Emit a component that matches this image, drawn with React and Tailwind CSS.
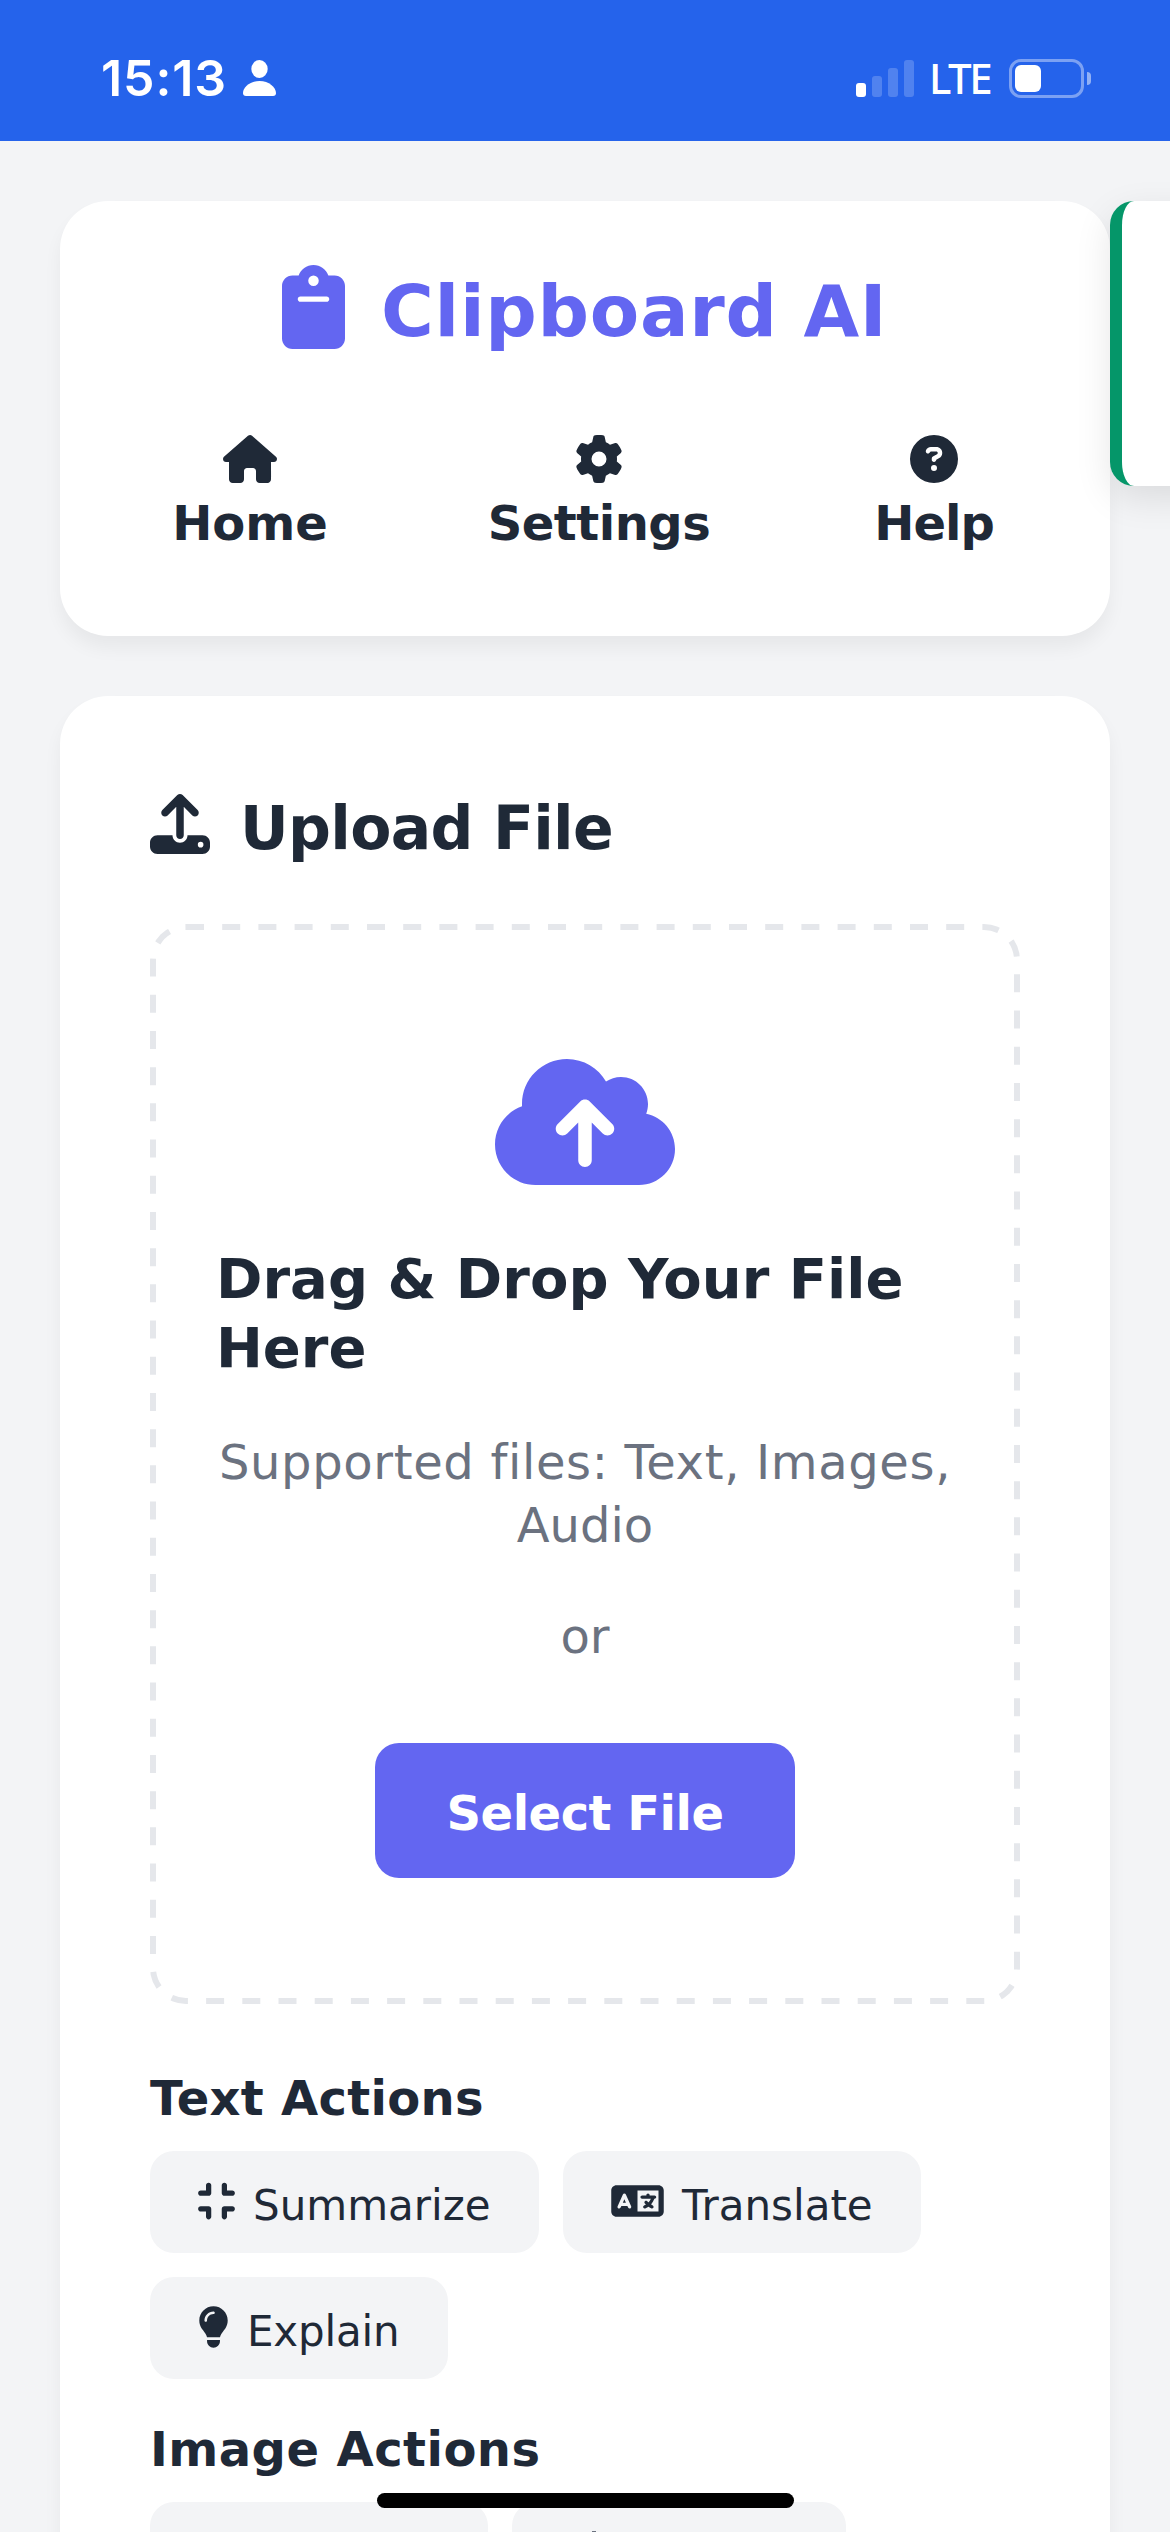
import { clsx } from 'clsx';
import {
  FaCircleQuestion,
  FaClipboard,
  FaCloudArrowUp,
  FaCompress,
  FaGear,
  FaHouse,
  FaLanguage,
  FaLightbulb,
  FaUpload,
} from 'react-icons/fa6';

const SIGNAL_BARS = ['h-[14px] bg-white', 'h-[21px] bg-white/20', 'h-[29px] bg-white/20', 'h-[37px] bg-white/20'];

function StatusBar() {
  return (
    <div className="flex h-[141px] justify-between bg-[#2563eb] pt-[57px] pr-[79px] pl-[101px] text-white">
      <div className="flex h-[42px] items-center">
        <span className="w-[142px] font-['Inter'] text-[50px] leading-none font-semibold tracking-[0.9px]">15:13</span>
        <svg className="h-9 w-[33px]" viewBox="0 0 33 36" fill="currentColor">
          <ellipse cx="16.5" cy="9" rx="8.2" ry="9" />
          <path d="M16.5 21C7 21 0 27.500 0 33Q0 36 3 36H30Q33 36 33 33C33 27.500 26 21 16.500 21Z" />
        </svg>
      </div>
      <div className="flex h-[42px] items-center">
        <div className="flex h-[37px] items-end gap-1.5">
          {SIGNAL_BARS.map((bar) => (
            <div key={bar} className={clsx('w-2.5 rounded-[3px]', bar)} />
          ))}
        </div>
        <span className="ml-[15px] w-[80px] font-['Noto_Sans'] text-[42px] leading-none font-medium tracking-[-2.5px]">LTE</span>
        <div className="flex h-[39px] w-[75px] rounded-[12px] border-3 border-white/40 p-[3px]">
          <div className="w-[26px] rounded-[6px] bg-white" />
        </div>
        <div className="ml-[3px] h-[13px] w-1 rounded-r-full bg-white/50" />
      </div>
    </div>
  );
}

function NavItem({ icon: Icon, label, className }) {
  return (
    <a className="flex flex-col items-center whitespace-nowrap">
      <Icon className="h-12 w-[54px]" />
      <span className={clsx('mt-[11px] text-5xl leading-[58px] font-bold', className)}>{label}</span>
    </a>
  );
}

function ActionButton({ icon: Icon, iconClass, className, children }) {
  return (
    <button className={clsx('flex h-[102px] items-center rounded-3xl bg-gray-100 pl-12 text-[42px] whitespace-nowrap', className)}>
      {Icon && <Icon className={clsx('mr-[18px] mb-[2px] h-[42px] shrink-0', iconClass)} />}
      <span className="mt-[6px]">{children}</span>
    </button>
  );
}

// Long dashes (18px) that follow the outer edge; the svg clips the outer half of the stroke
function DashedOutline() {
  return (
    <svg className="pointer-events-none absolute inset-0 h-full w-full rounded-[36px]" viewBox="0 0 870 1080" fill="none">
      <rect width="870" height="1080" rx="36" stroke="#e5e7eb" strokeWidth="12" strokeDasharray="18 18.2" />
    </svg>
  );
}

export default function App() {
  return (
    <div className="relative h-[2532px] w-[1170px] overflow-hidden bg-gray-100 font-['Verdana','DejaVu_Sans',sans-serif] text-[#1f2937]">
      <StatusBar />

      <div className="flex flex-col gap-[60px] px-[60px] pt-[60px]">
        <header className="h-[435px] rounded-[48px] bg-white pt-[63px] shadow-[0_12px_18px_rgba(0,0,0,0.05)]">
          <div className="flex h-[85px] items-center gap-9 pl-[222px] text-[#6366f1]">
            <FaClipboard className="h-[84px] w-[63px]" />
            <h1 className="mt-[8px] text-[72px] leading-none font-bold tracking-[0.7px] whitespace-nowrap">Clipboard AI</h1>
          </div>
          <nav className="mt-[86px] ml-[60px] grid grid-cols-[260px_438px_232px]">
            <NavItem icon={FaHouse} label="Home" />
            <NavItem icon={FaGear} label="Settings" className="tracking-[-0.5px]" />
            <NavItem icon={FaCircleQuestion} label="Help" className="tracking-[-1px]" />
          </nav>
        </header>

        <main className="h-[1900px] rounded-[48px] bg-white px-[90px] pt-[97px] shadow-[0_12px_18px_rgba(0,0,0,0.05)]">
          <div className="flex h-[61px] items-center gap-[30px]">
            <FaUpload className="h-[60px] w-[60px]" />
            <h2 className="mt-[8px] text-6xl leading-none font-bold tracking-[-0.7px] whitespace-nowrap">Upload File</h2>
          </div>

          {/* Drop zone */}
          <div className="relative mt-[70px] flex h-[1080px] flex-col items-center px-[66px] pt-[126px]">
            <DashedOutline />
            <FaCloudArrowUp className="h-36 w-[180px] text-[#6366f1]" />
            <h3 className="mt-[50px] w-full text-[56px] leading-[69px] font-bold whitespace-nowrap">
              Drag &amp; Drop Your File
              <br />
              Here
            </h3>
            <p className="mt-[49px] text-center text-5xl leading-[63px] whitespace-nowrap text-[#6b7280]">
              <span className="tracking-[0.65px]">Supported files: Text, Images,</span>
              <br />
              Audio
            </p>
            <p className="mt-[48px] text-5xl leading-[63px] text-[#6b7280]">or</p>
            <button className="mt-[75px] h-[135px] w-[420px] rounded-3xl bg-[#6366f1] pt-[5px] text-5xl font-bold tracking-[-0.5px] text-white">
              Select File
            </button>
          </div>

          {/* Text actions */}
          <h4 className="mt-[65px] text-5xl leading-[58px] font-bold tracking-[0.3px]">Text Actions</h4>
          <div className="mt-[24px] flex flex-wrap gap-6">
            <ActionButton icon={FaCompress} iconClass="w-[37px]" className="w-[389px]">Summarize</ActionButton>
            <ActionButton icon={FaLanguage} iconClass="w-[53px]" className="w-[358px]">Translate</ActionButton>
            <ActionButton icon={FaLightbulb} iconClass="w-[31px]" className="w-[298px] tracking-[-0.2px]">Explain</ActionButton>
          </div>

          {/* Image actions */}
          <h4 className="mt-[41px] text-5xl leading-[58px] font-bold tracking-[0.45px]">Image Actions</h4>
          <div className="mt-[24px] flex gap-6">
            <div className="h-[102px] w-[338px] rounded-3xl bg-gray-100" />
            <div className="h-[102px] w-[334px] rounded-3xl bg-gray-100 pt-[29px] pl-20">
              <svg className="h-1 w-1" viewBox="0 0 4 4" fill="#6b7280">
                <rect width="4" height="4" />
              </svg>
            </div>
          </div>
        </main>
      </div>

      {/* Toast sliding in from the right edge */}
      <div className="absolute top-[201px] left-[1110px] h-[285px] w-[400px] rounded-3xl border-l-12 border-[#059669] bg-white shadow-[0_12px_36px_rgba(0,0,0,0.1)]" />

      {/* Home indicator */}
      <div className="absolute top-[2493px] left-[377px] h-[15px] w-[417px] rounded-full bg-black" />
    </div>
  );
}
